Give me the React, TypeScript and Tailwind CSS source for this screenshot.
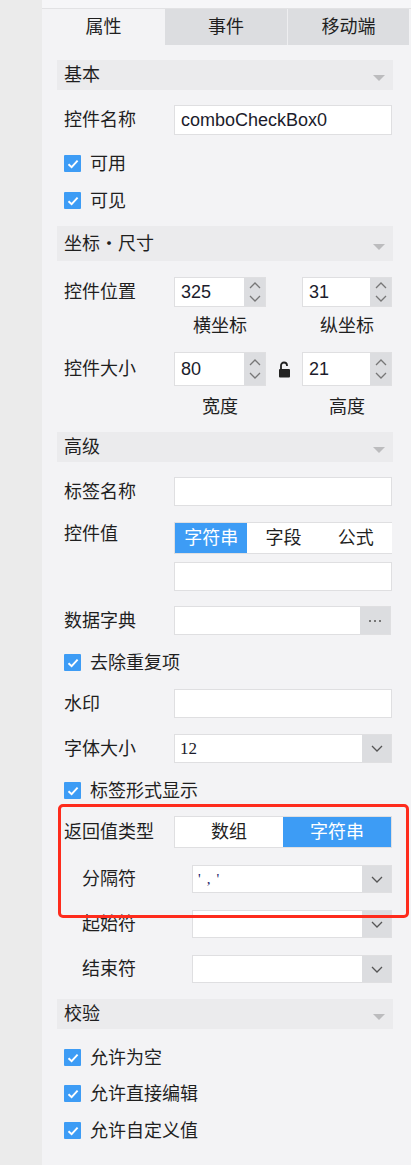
import type { ReactNode } from "react";

const FONT = "font-['Liberation_Sans','Noto_Sans_CJK_SC',sans-serif]";
const LABEL = "text-[18px] leading-none text-[#1f1f1f] whitespace-nowrap";

function Caret() {
  return (
    <svg width="12" height="6" viewBox="0 0 12 6" className="mt-[6px]">
      <path d="M0 0h12L6 6z" fill="#bcbcbe" />
    </svg>
  );
}

function Chevron({ up = false, color = "#555" }: { up?: boolean; color?: string }) {
  return (
    <svg width="12" height="7" viewBox="0 0 12 7">
      <path
        d={up ? "M1 6 6 1l5 5" : "M1 1l5 5 5-5"}
        stroke={color}
        strokeWidth="1.3"
        fill="none"
      />
    </svg>
  );
}

function SectionHeader({ title, className }: { title: string; className: string }) {
  return (
    <div className={`flex items-center justify-between bg-[#ebebed] pl-[7px] pr-[8px] ${className}`}>
      <span className={LABEL}>{title}</span>
      <Caret />
    </div>
  );
}

function Check({ label, className }: { label: string; className: string }) {
  return (
    <div className={`flex h-[17px] items-center gap-[9px] pl-[7px] ${className}`}>
      <span className="flex h-[17px] w-[17px] items-center justify-center rounded-[1px] bg-[#3d9cf5]">
        <svg width="12" height="10" viewBox="0 0 12 10">
          <path d="M1.5 5.3 4.6 8.2 10.6 1.6" stroke="#fff" strokeWidth="1.9" fill="none" />
        </svg>
      </span>
      <span className={LABEL}>{label}</span>
    </div>
  );
}

function Row({
  label,
  children,
  className,
  sub = false,
}: {
  label: string;
  children: ReactNode;
  className: string;
  sub?: boolean;
}) {
  return (
    <div className={`flex items-center ${className}`}>
      <span className={`shrink-0 ${sub ? "w-[135px] pl-[25px]" : "w-[117px] pl-[7px]"} ${LABEL}`}>
        {label}
      </span>
      {children}
    </div>
  );
}

function TextBox({ value }: { value?: string }) {
  return (
    <div className="flex h-full w-[218px] items-center border border-[#dfdfe1] bg-white pl-[6px] text-[18px] text-[#1c1c2c]">
      {value}
    </div>
  );
}

function Select({ value, wide = true, serif = false }: { value?: string; wide?: boolean; serif?: boolean }) {
  return (
    <div className={`flex h-full ${wide ? "w-[218px]" : "w-[200px]"} border border-[#dfdfe1] bg-white`}>
      <div
        className={`flex flex-1 items-center pl-[5px] ${
          serif
            ? "font-['Liberation_Serif',serif] text-[17px] text-[#1c1c2c]"
            : "font-['Liberation_Serif',serif] text-[15px] tracking-[6px] text-[#1c1c6a]"
        }`}
      >
        {value}
      </div>
      <div className="flex w-[29px] items-center justify-center bg-[#dcdde0]">
        <Chevron />
      </div>
    </div>
  );
}

function Spinner({ value, w }: { value: string; w: string }) {
  return (
    <div className={`flex h-full ${w} border border-[#dfdfe1] bg-white`}>
      <div className="flex flex-1 items-center pl-[6px] text-[18px] text-[#1c1c2c]">{value}</div>
      <div className="flex w-[21px] flex-col items-center justify-center gap-[6px] bg-[#dcdde0]">
        <Chevron up color="#777" />
        <Chevron color="#777" />
      </div>
    </div>
  );
}

function Segmented({ items, active, className }: { items: string[]; active: number; className: string }) {
  return (
    <div className={`flex w-[218px] border border-[#dfdfe1] bg-white ${className}`}>
      {items.map((item, i) => (
        <div
          key={item}
          className={`flex flex-1 items-center justify-center text-[18px] ${
            i === active ? "bg-[#3d9cf5] text-white" : "text-[#1f1f1f]"
          }`}
        >
          {item}
        </div>
      ))}
    </div>
  );
}

function Lock() {
  return (
    <svg width="13" height="17" viewBox="0 0 13 17">
      <path d="M3 8V4.5a3 3 0 0 1 6 0V5" stroke="#222" strokeWidth="1.8" fill="none" />
      <rect x="1" y="8" width="11" height="8.5" rx="1" fill="#222" />
    </svg>
  );
}

export default function App() {
  return (
    <div className={`relative flex h-[1165px] w-[411px] ${FONT}`}>
      <div className="w-[42px] shrink-0 bg-[#ebebeb]" />
      <div className="flex flex-1 flex-col bg-[#f3f3f5]">
        <div className="h-[9px] border-b border-[#e2e2e4] bg-[#f6f6f8]" />
        <div className="flex h-[36px] w-[367px]">
          <div className="flex w-[123px] items-center justify-center bg-[#f3f3f5] text-[18px] text-[#1f1f1f]">
            属性
          </div>
          <div className="flex w-[122px] items-center justify-center bg-[#dcdde0] text-[18px] text-[#1f1f1f]">
            事件
          </div>
          <div className="w-[1px] bg-[#eeeef0]" />
          <div className="flex w-[121px] items-center justify-center bg-[#dcdde0] text-[18px] text-[#1f1f1f]">
            移动端
          </div>
        </div>

        <div className="ml-[15px] flex w-[336px] flex-col">
          <SectionHeader title="基本" className="mt-[15px] h-[30px]" />
          <Row label="控件名称" className="mt-[15px] h-[30px]">
            <TextBox value="comboCheckBox0" />
          </Row>
          <Check label="可用" className="mt-[20px]" />
          <Check label="可见" className="mt-[20px]" />

          <SectionHeader title="坐标・尺寸" className="mt-[17px] h-[35px]" />
          <Row label="控件位置" className="mt-[16px] h-[30px]">
            <Spinner value="325" w="w-[92px]" />
            <div className="w-[36px]" />
            <Spinner value="31" w="w-[90px]" />
          </Row>
          <div className={`mt-[10px] flex h-[18px] pl-[117px] ${LABEL}`}>
            <span className="w-[92px] text-center">横坐标</span>
            <span className="w-[36px]" />
            <span className="w-[90px] text-center">纵坐标</span>
          </div>
          <Row label="控件大小" className="mt-[17px] h-[34px]">
            <Spinner value="80" w="w-[92px]" />
            <div className="flex w-[36px] items-center justify-center">
              <Lock />
            </div>
            <Spinner value="21" w="w-[90px]" />
          </Row>
          <div className={`mt-[12px] flex h-[18px] pl-[117px] ${LABEL}`}>
            <span className="w-[92px] text-center">宽度</span>
            <span className="w-[36px]" />
            <span className="w-[90px] text-center">高度</span>
          </div>

          <SectionHeader title="高级" className="mt-[16px] h-[30px]" />
          <Row label="标签名称" className="mt-[15px] h-[29px]">
            <TextBox />
          </Row>
          <div className="mt-[16px] flex items-start">
            <span className={`w-[117px] shrink-0 pl-[7px] pt-[3px] ${LABEL}`}>控件值</span>
            <Segmented items={["字符串", "字段", "公式"]} active={0} className="h-[32px] border-r-0" />
          </div>
          <div className="mt-[8px] h-[29px] pl-[117px]">
            <TextBox />
          </div>
          <Row label="数据字典" className="mt-[15px] h-[29px]">
            <div className="flex h-full w-[217px] border border-[#dfdfe1] bg-white">
              <div className="flex-1" />
              <div className="flex w-[30px] items-center justify-center gap-[3px] bg-[#dcdde0]">
                <span className="h-[2px] w-[2px] bg-[#777]" />
                <span className="h-[2px] w-[2px] bg-[#777]" />
                <span className="h-[2px] w-[2px] bg-[#777]" />
              </div>
            </div>
          </Row>
          <Check label="去除重复项" className="mt-[19px]" />
          <Row label="水印" className="mt-[18px] h-[29px]">
            <TextBox />
          </Row>
          <Row label="字体大小" className="mt-[16px] h-[29px]">
            <Select value="12" serif />
          </Row>
          <Check label="标签形式显示" className="mt-[19px]" />

          <Row label="返回值类型" className="mt-[17px] h-[32px]">
            <Segmented items={["数组", "字符串"]} active={1} className="h-full" />
          </Row>
          <Row label="分隔符" sub className="mt-[17px] h-[28px]">
            <Select value="','" wide={false} />
          </Row>
          <Row label="起始符" sub className="mt-[17px] h-[28px]">
            <Select wide={false} />
          </Row>
          <Row label="结束符" sub className="mt-[17px] h-[28px]">
            <Select wide={false} />
          </Row>

          <SectionHeader title="校验" className="mt-[16px] h-[30px]" />
          <Check label="允许为空" className="mt-[20px]" />
          <Check label="允许直接编辑" className="mt-[19px]" />
          <Check label="允许自定义值" className="mt-[20px]" />
        </div>
      </div>

      <div className="absolute left-[58px] top-[804px] h-[114px] w-[351px] rounded-[5px] border-[3px] border-[#fe2b1c]" />
    </div>
  );
}
